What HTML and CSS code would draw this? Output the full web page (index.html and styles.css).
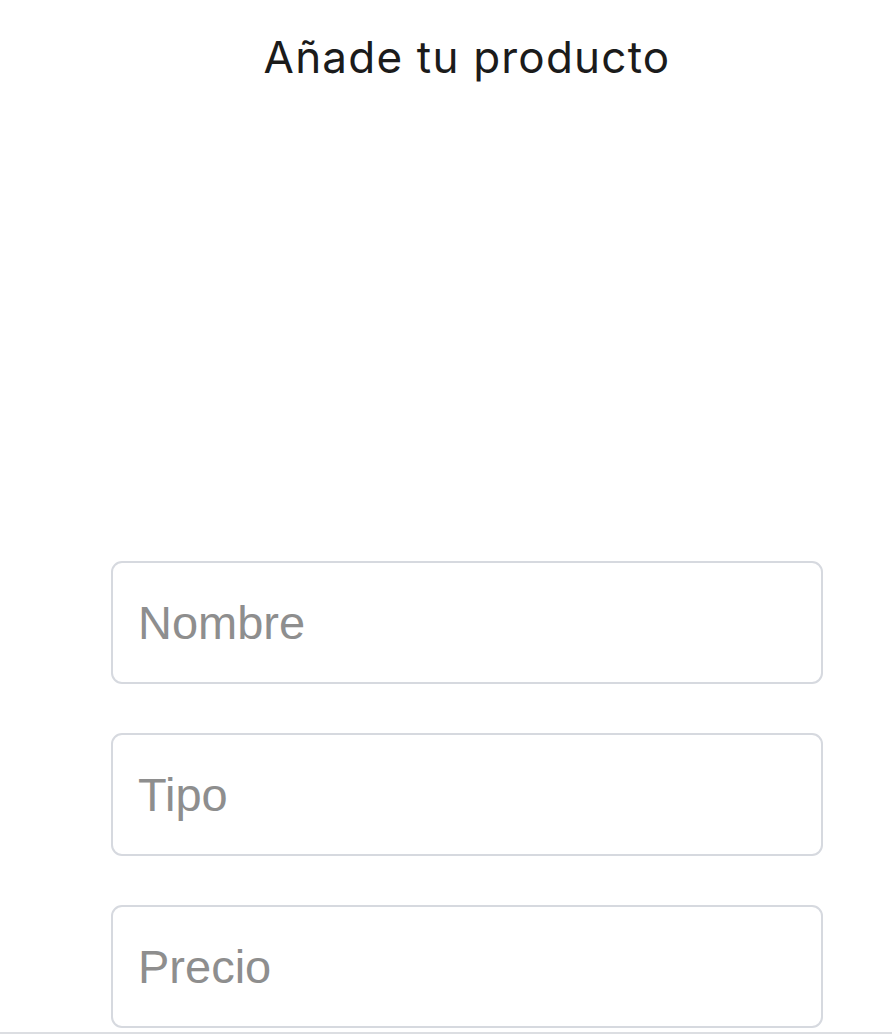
FILE: index.html
```html
<!DOCTYPE html>
<html lang="es">
<head>
<meta charset="utf-8">
<title>Añade tu producto</title>
<link rel="stylesheet" href="styles.css">
</head>
<body>
<main class="page">
  <h1 class="title">Añade tu producto</h1>
  <div class="preview"></div>
  <form class="form">
    <input class="field" type="text" placeholder="Nombre">
    <input class="field" type="text" placeholder="Tipo">
    <input class="field" type="text" placeholder="Precio">
  </form>
</main>
<div class="bottom-bar"></div>
</body>
</html>
```
FILE: styles.css
```css
html, body {
  margin: 0;
  padding: 0;
  background: #ffffff;
}
body {
  height: 1035px;
  overflow: hidden;
  display: flex;
  flex-direction: column;
}
.page {
  flex: 1;
  padding: 0 69px 0 111px;
  display: flex;
  flex-direction: column;
}
.title {
  margin: 0;
  padding-top: 29px;
  height: 61px;
  font-family: Inter, "Noto Sans", sans-serif;
  font-weight: 400;
  font-size: 44px;
  line-height: 56px;
  color: #1b1b1b;
  text-align: center;
  letter-spacing: 1.2px;
}
.preview {
  height: 471px;
}
.form {
  display: flex;
  flex-direction: column;
  gap: 49px;
}
.field {
  box-sizing: border-box;
  width: 712px;
  height: 123px;
  margin: 0;
  padding: 0 25px;
  border: 2px solid #d6d9df;
  border-radius: 11px;
  background: #fff;
  font-family: "Liberation Sans", Arial, sans-serif;
  font-size: 47px;
  color: #222;
  outline: none;
}
.field::placeholder {
  color: #8e8e8e;
  opacity: 1;
}
.bottom-bar {
  height: 2px;
  margin-bottom: 1px;
  background: #dcdee2;
}
```
